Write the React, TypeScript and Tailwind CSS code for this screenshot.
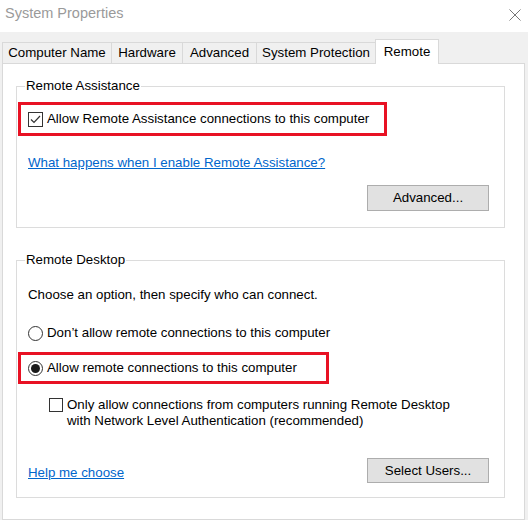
import React from "react";

const font = { fontFamily: '"Liberation Sans", Arial, sans-serif' };

function CheckBox({ checked, size = 15 }: { checked?: boolean; size?: number }) {
  return (
    <div
      className="shrink-0 border border-[#333] bg-white flex items-center justify-center"
      style={{ width: size, height: size }}
    >
      {checked && (
        <svg width="11" height="9" viewBox="0 0 11 9">
          <path d="M1 4.5 L4 7.5 L10 1" fill="none" stroke="#333" strokeWidth="1.2" />
        </svg>
      )}
    </div>
  );
}

function Radio({ checked }: { checked?: boolean }) {
  return (
    <div className="shrink-0 w-[15px] h-[15px] rounded-full border border-[#333] bg-white flex items-center justify-center">
      {checked && <div className="w-[9px] h-[9px] rounded-full bg-[#1a1a1a]" />}
    </div>
  );
}

export default function App() {
  return (
    <div className="w-[528px] h-[520px] bg-white overflow-hidden text-[13.3px] text-[#000] whitespace-nowrap" style={font}>
      {/* Title bar */}
      <div className="h-[32px] flex items-center justify-between pl-[5px] pr-[7px] pb-[4px]">
        <span className="text-[14.5px] text-[#9a9a9a]">System Properties</span>
        <svg width="12" height="12" viewBox="0 0 12 12" className="mt-[2px]">
          <path d="M0.5 0.5 L11.5 11.5 M11.5 0.5 L0.5 11.5" stroke="#777" strokeWidth="1" />
        </svg>
      </div>

      {/* Body */}
      <div className="h-[488px] bg-[#f0f0f0] pt-[7px] pl-[2px]">
        {/* Tabs */}
        <div className="flex items-end h-[24px] relative z-10">
          <div className="w-[109px] h-[21px] border-t border-l border-[#d9d9d9] flex items-center justify-center leading-none">
            Computer Name
          </div>
          <div className="w-[71px] h-[21px] border-t border-l border-[#d9d9d9] flex items-center justify-center leading-none">
            Hardware
          </div>
          <div className="w-[74px] h-[21px] border-t border-l border-[#d9d9d9] flex items-center justify-center leading-none">
            Advanced
          </div>
          <div className="w-[119px] h-[21px] border-t border-l border-[#d9d9d9] flex items-center justify-center leading-none">
            System Protection
          </div>
          <div className="w-[64px] h-[25px] -mb-px bg-white border-t border-l border-r border-[#d9d9d9] flex items-start pt-[5px] justify-center leading-none">
            Remote
          </div>
        </div>

        {/* Panel */}
        <div className="w-[523px] h-[457px] bg-white border border-[#d9d9d9] pt-[22px] pl-[13px]">
          {/* Remote Assistance group */}
          <div className="relative w-[489px] h-[142px] border border-[#dcdcdc] flex flex-col">
            <span className="absolute -top-[9px] left-[8px] bg-white px-[1px] leading-[16px]">Remote Assistance</span>
            <div className="ml-[1px] mt-[15px] w-[369px] h-[34px] border-[3px] border-[#e81123] flex items-center pl-[7px] gap-[4px]">
              <CheckBox checked />
              <span className="leading-none">Allow Remote Assistance connections to this computer</span>
            </div>
            <a className="ml-[11px] mt-[19px] leading-[16px] text-[#0066cc] underline self-start" href="#">
              What happens when I enable Remote Assistance?
            </a>
            <div className="self-end mr-[15px] mt-[14px] w-[122px] h-[26px] bg-[#e1e1e1] border border-[#adadad] flex items-center justify-center">
              Advanced...
            </div>
          </div>

          {/* Remote Desktop group */}
          <div className="relative mt-[32px] w-[489px] h-[238px] border border-[#dcdcdc] flex flex-col">
            <span className="absolute -top-[9px] left-[8px] bg-white px-[1px] leading-[16px]">Remote Desktop</span>
            <div className="ml-[11px] mt-[26px] leading-[16px]">Choose an option, then specify who can connect.</div>
            <div className="ml-[11px] mt-[22px] flex items-center gap-[4px] h-[16px]">
              <Radio />
              <span className="leading-none">Don’t allow remote connections to this computer</span>
            </div>
            <div className="ml-[1px] mt-[11px] w-[311px] h-[32px] border-[3px] border-[#e81123] flex items-center pl-[7px] gap-[4px]">
              <Radio checked />
              <span className="leading-none">Allow remote connections to this computer</span>
            </div>
            <div className="ml-[32px] mt-[13px] flex items-start gap-[4px]">
              <div className="mt-[1px]">
                <CheckBox size={14} />
              </div>
              <span className="leading-[16px]">
                Only allow connections from computers running Remote Desktop
                <br />
                with Network Level Authentication (recommended)
              </span>
            </div>
            <div className="mt-[29px] flex items-center justify-between pl-[11px] pr-[15px]">
              <a className="leading-[16px] text-[#0066cc] underline mt-[4px]" href="#">
                Help me choose
              </a>
              <div className="w-[122px] h-[25px] bg-[#e1e1e1] border border-[#adadad] flex items-center justify-center">
                Select Users...
              </div>
            </div>
          </div>
        </div>
      </div>
    </div>
  );
}
